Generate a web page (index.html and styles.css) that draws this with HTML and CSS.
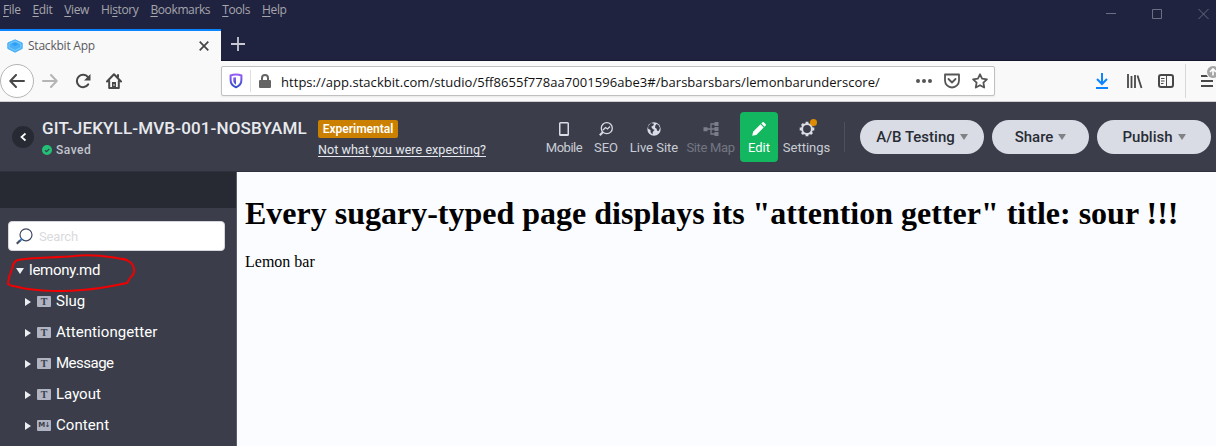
FILE: index.html
```
<!DOCTYPE html>
<html lang="en">
<head>
<meta charset="utf-8">
<title>Stackbit App</title>
<link rel="stylesheet" href="styles.css">
</head>
<body>
<div class="window">
  <header class="titlebar">
    <div class="menu-row">
      <nav class="menu">
        <span><u>F</u>ile</span><span><u>E</u>dit</span><span><u>V</u>iew</span><span>Hi<u>s</u>tory</span><span><u>B</u>ookmarks</span><span><u>T</u>ools</span><span><u>H</u>elp</span>
      </nav>
      <svg class="controls" width="106" height="12" viewBox="0 0 106 12" fill="none" stroke="#6d6f82"><path d="M0 5.500h10M46.500 1.500h9v9h-9z"/><path d="M92.500 1l10 10M102.500 1l-10 10" stroke-width=".9"/></svg>
    </div>
    <div class="tabs">
      <div class="tab">
        <svg width="16" height="14" viewBox="0 0 16 14"><path d="M8 .8 15.200 4v5.500L8 13.200.8 9.500V4z" fill="#49b0f8" stroke="#49b0f8" stroke-linejoin="round"/><path d="m2 5 6-3 6 3v3.500l-6 3-6-3z" fill="none" stroke="#8bd0ff" stroke-width=".8"/><path d="m4.500 5.300 3.500-1.700 3.500 1.700L8 7z" fill="#2a9df4"/></svg>
        <span>Stackbit App</span>
        <svg class="tab-close" width="10" height="10" viewBox="0 0 10 10" fill="none" stroke="#444" stroke-width="1.700"><path d="m.7.7 8.600 8.600M9.300.7.7 9.300"/></svg>
      </div>
      <svg class="new-tab" width="14" height="14" viewBox="0 0 14 14" fill="none" stroke="#c7c8d2" stroke-width="1.800"><path d="M7 0v14M0 7h14"/></svg>
    </div>
  </header>

  <div class="toolbar">
    <div class="back"><svg width="16" height="14" viewBox="0 0 16 14" fill="none" stroke="#484848" stroke-width="2" stroke-linecap="round" stroke-linejoin="round"><path d="M15 7H1.500M7 1 1.300 7 7 13"/></svg></div>
    <svg class="forward" width="16" height="14" viewBox="0 0 16 14" fill="none" stroke="#b5b5b6" stroke-width="2" stroke-linecap="round" stroke-linejoin="round"><path d="M1 7h13.500M9 1l5.700 6L9 13"/></svg>
    <svg class="reload" width="16" height="16" viewBox="0 0 16 16"><path d="M13.200 11.400A6.200 6.200 0 1 1 13 4.200" fill="none" stroke="#484848" stroke-width="2" stroke-linecap="round"/><path d="M15.500 1v6.500H9z" fill="#484848"/></svg>
    <svg class="home" width="16" height="16" viewBox="0 0 16 16"><path d="M1 8.500 8 1.300l7 7.200M3.200 8v7h9.600V8M12 4V2" fill="none" stroke="#484848" stroke-width="2" stroke-linecap="round" stroke-linejoin="round"/><path d="M6 9h4v6H6z" fill="#484848"/><path d="M8 11v2" stroke="#ddd"/></svg>
    <div class="url-box">
      <svg class="shield" width="14" height="16" viewBox="0 0 14 16"><defs><linearGradient id="violet" x2="0" y2="1"><stop stop-color="#945cf5"/><stop offset="1" stop-color="#3650cb"/></linearGradient></defs><path d="M7 1.500c2 0 4 .4 5.400 1V7c0 3.500-2 6-5.400 7.200C3.600 13 1.600 10.500 1.600 7V2.500C3 1.900 5 1.500 7 1.500z" fill="none" stroke="url(#violet)" stroke-width="2"/><path d="M7 4.200v7.500C5 10.500 4.300 9 4.300 7V4.600z" fill="url(#violet)"/></svg>
      <i class="url-sep"></i>
      <svg class="lock" width="12" height="14" viewBox="0 0 12 14"><rect y="6" width="12" height="8" rx="1" fill="#646464"/><path d="M3 7V4a3 3 0 0 1 6 0v3" fill="none" stroke="#646464" stroke-width="2"/></svg>
      <span class="url">https://app.stackbit.com/studio/5ff8655f778aa7001596abe3#/barsbarsbars/lemonbarunderscore/</span>
      <svg class="url-icons" width="72" height="16" viewBox="0 0 72 16" fill="none" stroke="#555" stroke-width="1.800" stroke-linejoin="round" stroke-linecap="round"><g fill="#555" stroke="none"><circle cx="2" cy="8" r="2"/><circle cx="8" cy="8" r="2"/><circle cx="14" cy="8" r="2"/></g><path d="M29 1.500h14v6a7 7 0 0 1-14 0zM32.500 6l3.500 3.500L39.500 6"/><path d="m64 1.300 2.100 4.300 4.800.7-3.500 3.300.8 4.900L64 12.200l-4.200 2.300.8-4.900-3.500-3.300 4.800-.7z"/></svg>
    </div>
    <svg class="tools" width="78" height="16" viewBox="0 0 78 16" fill="none" stroke="#484848" stroke-width="2"><g stroke="#0a84ff"><path d="M6 0v11M1 6l5 5 5-5M0 15h12"/></g><path d="M32 1v14M35.500 3v12M39 2v13M41.500 2.500l4 12.500" stroke-width="1.800"/><rect x="63" y="2" width="14" height="12" rx="2"/><path d="M70.500 2v12" stroke-width="1"/><path d="M65 5.500h3.500M65 8h3.500M65 10.500h2.500" stroke-width="1"/></svg>
    <i class="tool-sep"></i>
    <svg class="burger" width="15" height="24" viewBox="0 0 15 24"><path d="M0 11h12M0 16h12M0 21h12" stroke="#484848" stroke-width="2"/><circle cx="12" cy="7" r="7" fill="#f9f9fa"/><circle cx="12" cy="7" r="6" fill="#a4a4a4"/><path d="M12 10.500V4M9 7l3-3 3 3" fill="none" stroke="#fff" stroke-width="1.600"/></svg>
  </div>

  <header class="app-bar">
    <div class="round"><svg width="7" height="10" viewBox="0 0 7 10" fill="none" stroke="#fff" stroke-width="1.700"><path d="M5.500 1.500 1.500 5l4 3.500"/></svg></div>
    <div class="project">
      <div class="name">GIT-JEKYLL-MVB-001-NOSBYAML</div>
      <div class="saved"><svg width="10" height="10" viewBox="0 0 10 10"><circle cx="5" cy="5" r="5" fill="#21c277"/><path d="m3 5.200 1.500 1.400L7.200 4" fill="none" stroke="#3b3e4a" stroke-width="1.200"/></svg><span>Saved</span></div>
    </div>
    <div class="notice"><span class="badge">Experimental</span><a>Not what you were expecting?</a></div>
    <nav class="modes">
      <div class="mode mobile"><svg width="16" height="16" viewBox="0 0 16 16"><rect x="3.750" y="1.750" width="8.500" height="12.500" rx=".8" fill="none" stroke="#d9dce4" stroke-width="1.500"/><path d="M4 13.500h8" stroke="#d9dce4"/></svg><span>Mobile</span></div>
      <div class="mode seo"><svg width="16" height="16" viewBox="0 0 16 16" fill="none" stroke="#d9dce4" stroke-width="1.300"><circle cx="8.800" cy="7.200" r="5.500"/><path d="m5 11-3.200 3.200" stroke-width="2"/><path d="m5 9 2.500-2.500 2 1.500L12 5.500"/></svg><span>SEO</span></div>
      <div class="mode live"><svg width="16" height="16" viewBox="0 0 16 16"><circle cx="8" cy="8" r="6.700" fill="#d9dce4"/><path d="m5 2 3 .7-.6 1.800-2.200 1.200 1.300 2 2 1.300-1.700 2-.3 2.600-1.800-2-.3-2.500L2 7.600 2.300 5zM10.500 3l2 1 1.500 3-1.300 3-1.500-.2-.6-2-1.600-1.200.3-2z" fill="#3b3e4a"/></svg><span>Live Site</span></div>
      <div class="mode map"><svg width="16" height="16" viewBox="0 0 16 16" fill="#7b7e8a"><path d="M.5 6.300h4v4h-4zM11.500 1h4v4h-4zM11.500 6h4v4h-4zM11.500 11h4v4h-4z"/><path d="M4 8h8M12 3H8v10h4" fill="none" stroke="#7b7e8a" stroke-width="1.300"/></svg><span>Site Map</span></div>
      <div class="mode edit"><svg width="16" height="16" viewBox="0 0 16 16" fill="#fff"><path d="m1.200 14.800.9-4.100 7.400-7.400 3.200 3.200-7.400 7.400zM10.300 2.500l1.200-1.200q.7-.5 1.300 0l1.900 1.900q.5.700 0 1.300l-1.200 1.200z"/></svg><span>Edit</span></div>
      <div class="mode settings"><svg width="16" height="16" viewBox="0 0 16 16" fill="none" stroke="#d9dce4"><circle cx="8" cy="8" r="4.900" stroke-width="2"/><path d="M8 .7v2.500M8 12.800v2.500M.7 8h2.500M12.800 8h2.500M2.900 2.900l1.700 1.700M11.400 11.400l1.700 1.700M2.900 13.100l1.700-1.700M11.400 4.600l1.700-1.700" stroke-width="2.800"/></svg><i class="dot"></i><span>Settings</span></div>
    </nav>
    <i class="app-sep"></i>
    <div class="actions">
      <button class="ab"><span>A/B Testing</span><i></i></button><button class="share"><span>Share</span><i></i></button><button class="publish"><span>Publish</span><i></i></button>
    </div>
  </header>

  <div class="workspace">
    <aside class="sidebar">
      <div class="sidebar-top"></div>
      <div class="search"><svg width="17" height="17" viewBox="0 0 17 17" fill="none"><circle cx="10" cy="6.800" r="6" stroke="#3f4863" stroke-width="1.200"/><path d="m5.800 11-2.300 2.300" stroke="#2b82d9" stroke-width="2"/><path d="m4 12.500-3.200 3.200" stroke="#4b4e5b" stroke-width="2.200"/></svg><span>Search</span></div>
      <div class="tree">
        <div class="row root"><i class="open"></i><span>lemony.md</span></div>
        <div class="row"><i></i><b class="type">T</b><span>Slug</span></div>
        <div class="row"><i></i><b class="type">T</b><span class="wide">Attentiongetter</span></div>
        <div class="row"><i></i><b class="type">T</b><span class="tight">Message</span></div>
        <div class="row"><i></i><b class="type">T</b><span>Layout</span></div>
        <div class="row"><i></i><b class="type md">M↓</b><span class="wide">Content</span></div>
      </div>
      <svg class="marker" width="132" height="42" viewBox="4 252 132 42" fill="none" stroke="#f00000" stroke-width="2" stroke-linecap="round" stroke-linejoin="round"><path d="M132 264C130 261 127 260 122 259C124 258 127 260 127 260C111 256 88 254 74 256C54 258 32 257 18 260C14 261 13 264 12 269C10 274 8 279 8 284C12 287 17 286 22 288C37 291 64 292 82 290C97 289 113 286 127 283C129 281 128 279 132 276C135 273 135 268 132 264"/></svg>
    </aside>
    <main class="preview">
      <h1>Every sugary-typed page displays its "attention getter" title: sour !!!</h1>
      <p>Lemon bar</p>
    </main>
  </div>
</div>
</body>
</html>
```
FILE: styles.css
```
* { box-sizing: border-box; }
body { margin: 0; overflow: hidden; }
svg { display: block; flex: none; }
i { font-style: normal; flex: none; }
.window { width: 1216px; height: 446px; display: flex; flex-direction: column; overflow: hidden; font-family: Roboto, "Liberation Sans", sans-serif; white-space: nowrap; }

.titlebar { height: 61px; flex: none; background: #202340; display: flex; flex-direction: column; border-bottom: 1px solid #14162b; }
.menu-row { height: 29px; flex: none; display: flex; justify-content: space-between; padding: 0 4px 0 3px; }
.menu { display: flex; gap: 12px; font: 12px/20px "Open Sans", "Noto Sans", sans-serif; color: #a6a6ac; letter-spacing: -0.38px; }
.menu u { text-underline-offset: 2px; }
.controls { margin-top: 8px; }
.tabs { display: flex; height: 31px; flex: none; align-items: flex-start; }
.tab { width: 221px; height: 32px; background: #f9f9fa; border-top: 2px solid #0a84ff; display: flex; align-items: center; padding: 0 12px 0 7px; font: 12px/20px "Open Sans", "Noto Sans", sans-serif; color: #5a5a5e; letter-spacing: -0.22px; }
.tab span { margin-left: 5px; }
.tab-close { margin-left: auto; }
.new-tab { margin: 8px 0 0 10px; }

.toolbar { height: 41px; background: #f9f9fa; border-bottom: 1px solid #cfcfd2; display: flex; align-items: center; flex: none; }
.back { width: 34px; height: 34px; border: 1px solid #b5b5b6; border-radius: 50%; background: #fff; display: grid; place-items: center; }
.forward { margin-left: 8px; }
.reload { margin-left: 17px; }
.home { margin-left: 15px; }
.url-box { margin-left: 99px; width: 774px; height: 30px; border: 1px solid #c0c0c2; border-radius: 2px; background: #fff; display: flex; align-items: center; flex: none; padding-left: 7px; box-shadow: 0 1px 2px #0001; }
.url-sep { width: 1px; height: 22px; background: #dedede; margin: 0 8px 0 7px; }
.url { font: 13px/20px "Open Sans", "Noto Sans", sans-serif; color: #111; margin: 2px 0 0 10px; letter-spacing: 0.045px; }
.url-icons { margin-left: auto; margin-right: 6px; }
.tools { margin-left: 101px; }
.tool-sep { width: 1px; height: 34px; background: #d7d7db; margin-left: 11px; }
.burger { margin: -8px 0 0 15px; }

.app-bar { height: 70px; flex: none; background: #3b3e4a; border-bottom: 1px solid #2f323c; display: flex; align-items: flex-start; padding-left: 12px; }
.round { width: 22px; height: 22px; background: #272a33; border-radius: 50%; margin-top: 24px; display: grid; place-items: center; }
.project { width: 276px; margin: 16px 0 0 8px; color: #e8eaef; }
.name { font-size: 17px; line-height: 20px; font-weight: 500; letter-spacing: .15px; }
.saved { display: flex; align-items: center; gap: 4px; font-size: 12px; font-weight: 500; line-height: 16px; color: #c1c4cd; margin-top: 4px; }
.saved span { letter-spacing: .5px; }
.notice { width: 225px; margin-top: 18px; display: flex; flex-direction: column; align-items: flex-start; }
.badge { background: #cb8000; color: #fff; width: 80px; height: 18px; border-radius: 2px; text-align: center; font-size: 12px; line-height: 18px; font-weight: 600; }
.notice a { font-size: 12.500px; line-height: 16px; color: #e5e8ef; margin-top: 4px; letter-spacing: .06px; text-decoration: underline; text-underline-offset: 2px; }
.modes { display: flex; margin-top: 10px; color: #c9ccd5; font-size: 13px; line-height: 16px; }
.mode { height: 50px; display: flex; flex-direction: column; align-items: center; padding-top: 9px; position: relative; gap: 3px; border-radius: 4px; }
.mobile { width: 42px; letter-spacing: -.5px; } .seo { width: 42px; } .live { width: 54px; } .map { width: 59px; color: #737682; letter-spacing: -.35px; } .edit { width: 38px; background: #12b75f; color: #fff; } .settings { width: 57px; }
.dot { position: absolute; width: 7px; height: 7px; border-radius: 50%; background: #df8b00; left: 32px; top: 7px; }
.app-sep { width: 1px; height: 30px; background: #4c505c; margin: 20px 0 0 9px; }
.actions { display: flex; gap: 8px; margin: 18px 0 0 15px; }
.actions button { border: 0; height: 34px; border-radius: 17px; background: #d9dce4; font: 500 15px/34px Roboto, sans-serif; color: #292c35; display: flex; align-items: center; justify-content: center; padding: 0; gap: 5px; }
.actions .ab { width: 124px; } .actions .share { width: 97px; } .actions .publish { width: 114px; }
.actions i { border: 4px solid transparent; border-top: 6px solid #808285; border-bottom: 0; }

.workspace { flex: 1; display: flex; min-height: 0; }
.sidebar { width: 237px; background: #3b3e4a; border-right: 1px solid #5b5e70; position: relative; }
.sidebar-top { height: 36px; background: #272a32; }
.search { width: 217px; height: 30px; margin: 13px 0 0 8px; background: #fff; border: 1px solid #d4d6db; border-radius: 4px; display: flex; align-items: center; gap: 6px; padding-left: 7px; font-size: 13px; letter-spacing: -.15px; color: #d9dadd; }
.tree { padding-top: 4px; color: #fff; font-size: 15px; }
.row { height: 31px; display: flex; align-items: center; padding-left: 25px; }
.row span { margin-top: -2px; }
.row .wide { letter-spacing: .08px; }
.row .tight { letter-spacing: -.5px; }
.row i { border: 4px solid transparent; border-left: 6px solid #eceef2; border-right: 0; }
.row.root { padding-left: 16px; letter-spacing: -.25px; }
.row i.open { border: 4px solid transparent; border-top: 6px solid #eceef2; border-bottom: 0; margin-right: 5px; }
.type { width: 14px; height: 11px; background: #afb3c2; color: #3b3e4a; border-radius: 1px; font: bold 10px/11px "Liberation Serif", serif; text-align: center; margin: 0 5px 0 6px; flex: none; }
.md { font: bold 7px/11px "DejaVu Sans", sans-serif; letter-spacing: -.7px; }
.marker { position: absolute; left: 4px; top: 80px; }
.preview { flex: 1; background: #fbfcff; color: #000; font: 16px/18px "Liberation Serif", serif; padding: 0 8px; }
.preview h1 { font-size: 32px; line-height: 37px; margin: 23px 0 21px; }
.preview p { margin: 0; }
```
